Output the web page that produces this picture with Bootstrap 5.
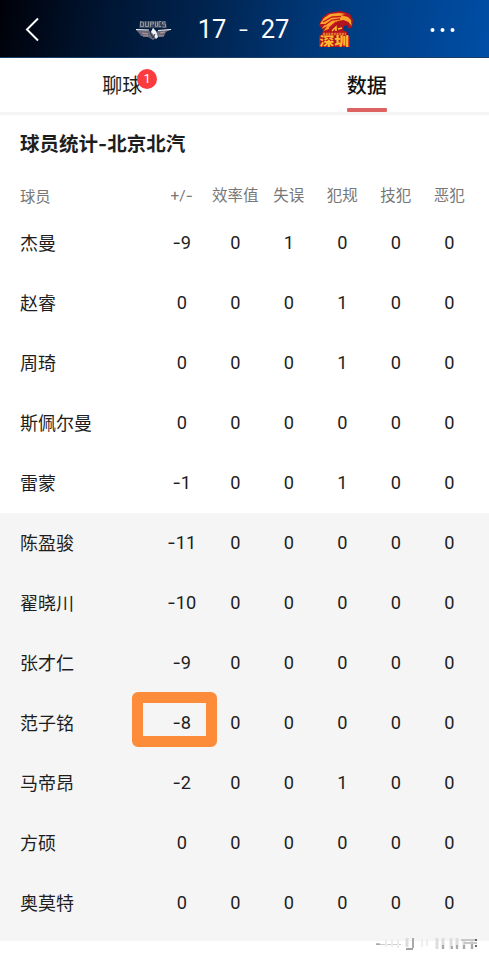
<!DOCTYPE html>
<html lang="zh-CN">
<head>
<meta charset="utf-8">
<meta name="viewport" content="width=device-width, initial-scale=1">
<title>球员统计</title>
<link href="https://cdn.jsdelivr.net/npm/bootstrap@5.3.0/dist/css/bootstrap.min.css" rel="stylesheet">
<style>
body{font-family:"Noto Sans CJK SC",sans-serif;color:#1e1e1e;height:960px;overflow:hidden;background:#fff}
.topbar{height:58px;background:linear-gradient(100deg,#000108 0%,#001634 22%,#002450 42%,#003a7c 66%,#004ea6 100%);display:grid;grid-template-columns:132px 42px 139px 44px 1fr;align-items:center;color:#fff;border-bottom:1px solid #173f68}
.score{font-family:Roboto,sans-serif;font-size:25.5px;line-height:58px;display:grid;grid-template-columns:34px 1fr 34px;padding-left:21px;padding-right:21px;text-align:center;white-space:nowrap}
.score .m{font-weight:300;font-size:25px}
.ui-tabs{height:57px;border-bottom:3px solid #f5f5f5;font-size:20px;line-height:54px}
.ui-tabs>div{width:50%;text-align:center}
.hot{position:absolute;left:35px;top:11px;width:20px;height:20px;border-radius:50%;background:#fb3b3e;color:#fff;font-size:13px;font-family:Roboto,sans-serif;line-height:20px;text-align:center}
.chosen::after{content:"";position:absolute;left:0;right:0;top:50px;height:4px;background:#df6263;border-radius:1px}
.chosen{font-weight:500;color:#111}
.heading{font-size:19.5px;font-weight:700;line-height:28px;padding:14px 20px 0;height:63px;white-space:nowrap}
.stat{display:grid;grid-template-columns:135px repeat(6,53.5px);padding-left:20px;height:60px;line-height:60px;font-size:18.2px;text-align:center;white-space:nowrap;font-family:Roboto,"Noto Sans CJK SC",sans-serif}
.stat>:first-child{text-align:left;font-size:18px;line-height:61px}
.stat.labels{height:35px;line-height:37px;font-size:15.5px;color:#777}
.stat.labels>:first-child{font-size:15.3px;line-height:38px}
.m{font-family:Inter,sans-serif;line-height:1}
.bench{background:#f5f5f5;height:428px}
.marker{position:absolute;left:-23px;top:-1px;width:85px;height:55px;border:11px solid #fc8c39;border-radius:6px}
</style>
<script src="https://cdn.jsdelivr.net/npm/bootstrap@5.3.0/dist/js/bootstrap.bundle.min.js"></script>
</head>
<body>
<header class="topbar">
<svg width="60" height="58" fill="none" stroke="#fff" stroke-width="2"><path d="M38 18.500 27 29.500 38 40.500"/></svg>
<svg width="42" height="58" viewBox="132 0 42 58">
<path d="M140 21h26l1 7h-28z" fill="#36435a"/>
<path d="M140.500 21.500v5h3v-4zM145.500 21.500v5h3v-5M150.500 27v-5h3v2h-3M155.500 21.500v5h2v-5M161 21.500h-2v5h2M165.500 22h-3v2h3v3h-3" fill="none" stroke="#8f939e"/>
<path d="M135.500 29.500 147 30l4 2 2-4 3 4 4-2 12-1-6 3-2 4-6 1-5 3-5-3-7-1-2-3z" fill="#66687c"/>
<path d="m136 29.500 13 .5M158 30.500l13-1" stroke="#efebe9" stroke-width="1.200"/>
<path d="m142 33 6 1M160 33l5-1M143 36h5M159 36h5" stroke="#c39b91"/>
<path d="m153 28 3 3 2 6-2 2-3-5-2-2z" fill="#f2f1f4"/><path d="m150 32 3 6 2-4" stroke="#293549" fill="none"/>
</svg>
<div class="score"><span>17</span><span class="m" style="line-height:58px">-</span><span>27</span></div>
<svg width="44" height="58" viewBox="313 0 44 58">
<path d="m319 25 3-7 6-5 13-2 9 3 3 6-1 7-3 2-2-4-3 1-1 4 4 2v4l3 1v10h-31v-11l3-2 1-4z" fill="#b4141f"/>
<path d="m320 24 4-6 6-4 9-1 7 1-5 1 7 2 3 3 .5 6-3-4-5-2-6 1-5 4-4 4-5 2 4-5-6 3 4-5z" fill="#fba52c"/>
<path d="m323 22 9-5 9-.5M325 25l7-5 8-1M329 28l7-6" fill="none" stroke="#c71b20" stroke-width="1.300"/>
<path d="m332 31 4-4v4M338 29l4-1" fill="none" stroke="#ffc22d" stroke-width="1.500"/>
<path d="M323 34h23" stroke="#e9772b" stroke-width="2.500" stroke-dasharray="2 .7"/>
<text x="319.500" y="46" font-size="12.500" font-weight="900" fill="#ffb62d" textLength="29.500" lengthAdjust="spacingAndGlyphs">深圳</text>
</svg>
<svg width="132" height="58" viewBox="357 0 132 58" fill="#fff"><circle cx="432.500" cy="30" r="2"/><circle cx="442.500" cy="30" r="2"/><circle cx="452.500" cy="30" r="2"/></svg>
</header>
<nav class="ui-tabs d-flex">
<div><span class="position-relative d-inline-block">聊球<span class="hot">1</span></span></div>
<div><span class="position-relative d-inline-block chosen">数据</span></div>
</nav>
<main>
<h1 class="heading m-0">球员统计<span class="m">-</span>北京北汽</h1>
<div class="stat labels"><span>球员</span><span>+/<span class="m">-</span></span><span>效率值</span><span>失误</span><span>犯规</span><span>技犯</span><span>恶犯</span></div>
<section>
<div class="stat"><span>杰曼</span><span><span class="m">-</span>9</span><span>0</span><span>1</span><span>0</span><span>0</span><span>0</span></div>
<div class="stat"><span>赵睿</span><span>0</span><span>0</span><span>0</span><span>1</span><span>0</span><span>0</span></div>
<div class="stat"><span>周琦</span><span>0</span><span>0</span><span>0</span><span>1</span><span>0</span><span>0</span></div>
<div class="stat"><span>斯佩尔曼</span><span>0</span><span>0</span><span>0</span><span>0</span><span>0</span><span>0</span></div>
<div class="stat"><span>雷蒙</span><span><span class="m">-</span>1</span><span>0</span><span>0</span><span>1</span><span>0</span><span>0</span></div>
</section>
<section class="bench">
<div class="stat"><span>陈盈骏</span><span><span class="m">-</span>11</span><span>0</span><span>0</span><span>0</span><span>0</span><span>0</span></div>
<div class="stat"><span>翟晓川</span><span><span class="m">-</span>10</span><span>0</span><span>0</span><span>0</span><span>0</span><span>0</span></div>
<div class="stat"><span>张才仁</span><span><span class="m">-</span>9</span><span>0</span><span>0</span><span>0</span><span>0</span><span>0</span></div>
<div class="stat"><span>范子铭</span><span class="position-relative"><span class="m">-</span>8<i class="marker"></i></span><span>0</span><span>0</span><span>0</span><span>0</span><span>0</span></div>
<div class="stat"><span>马帝昂</span><span><span class="m">-</span>2</span><span>0</span><span>0</span><span>1</span><span>0</span><span>0</span></div>
<div class="stat"><span>方硕</span><span>0</span><span>0</span><span>0</span><span>0</span><span>0</span><span>0</span></div>
<div class="stat"><span>奥莫特</span><span>0</span><span>0</span><span>0</span><span>0</span><span>0</span><span>0</span></div>
</section>
</main>
<footer class="d-flex justify-content-end">
<svg width="129" height="19" viewBox="360 941 129 19" overflow="visible" fill="none">
<path d="M376 944.500h25" stroke="#ccc"/><path d="M376 944h4" stroke="#888"/>
<path d="M386 939v8M392 939v8M398 939v9M422 939v8M427 939v7" stroke="#eee" stroke-width="2"/>
<path d="M407 938v9" stroke="#ddd" stroke-width="3"/><path d="M413 938v10" stroke="#aaa" stroke-width="2"/><path d="M406 949h7" stroke="#444"/>
<path d="M437 938v11M443 938v11M451 938v11M457 938v11M464 940v9M472 940v9" stroke="#ddd" stroke-width="3"/>
<path d="M443 945v4M452 946v3M457 945v4M464 945v4M472 944v5" stroke="#aaa" stroke-width="2"/>
<path d="M461 940h16M464 943h13" stroke="#c8c8c8" stroke-width="2"/><path d="M475 940h2M475 946h2" stroke="#666" stroke-width="2"/>
</svg>
</footer>
</body>
</html>
